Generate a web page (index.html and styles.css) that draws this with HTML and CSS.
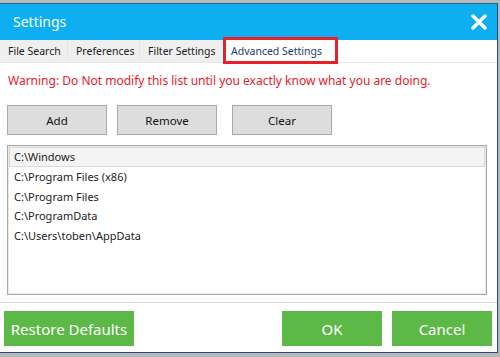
FILE: index.html
```html
<!DOCTYPE html>
<html lang="en">
<head>
    <meta charset="UTF-8">
    <meta name="viewport" content="width=device-width, initial-scale=1.0">
    <title>Settings</title>
    <link rel="stylesheet" href="styles.css">
</head>
<body>
    <div class="backdrop-strip"></div>
    <div class="dialog">
        <div class="titlebar">
            <span class="title">Settings</span>
            <button class="close" aria-label="Close">
                <svg width="16" height="16" viewBox="0 0 16 16">
                    <path d="M2 2 L14 14 M14 2 L2 14" stroke="#fff" stroke-width="3.4" stroke-linecap="round"/>
                </svg>
            </button>
        </div>
        <div class="tabs">
            <div class="tab tab-files">File Search</div>
            <div class="tab tab-prefs">Preferences</div>
            <div class="tab tab-filter">Filter Settings</div>
            <div class="tab active">Advanced Settings</div>
            <div class="tabs-rest"></div>
        </div>
        <div class="content">
            <p class="warning">Warning: Do Not modify this list until you exactly know what you are doing.</p>
            <div class="actions">
                <button class="btn">Add</button>
                <button class="btn btn-remove">Remove</button>
                <button class="btn btn-clear">Clear</button>
            </div>
            <ul class="paths">
                <li class="selected">C:\Windows</li>
                <li>C:\Program Files (x86)</li>
                <li>C:\Program Files</li>
                <li>C:\ProgramData</li>
                <li>C:\Users\toben\AppData</li>
            </ul>
        </div>
        <div class="footer">
            <button class="green restore">Restore Defaults</button>
            <div class="spacer"></div>
            <button class="green">OK</button>
            <button class="green">Cancel</button>
        </div>
    </div>
</body>
</html>
```

FILE: styles.css
```css
body {
    margin: 0;
    padding: 0;
    background-color: #b9b9b9;
    font-family: "Noto Sans", "Open Sans", sans-serif;
    overflow: hidden;
}

.backdrop-strip {
    height: 3px;
    background-color: #b9b9b9;
}

.dialog {
    width: 497px;
    background-color: #fff;
    border-top: 1px solid #1b6a9c;
    border-right: 1px solid #1b4f7a;
    border-bottom: 1px solid #1b4f7a;
}

.titlebar {
    height: 36px;
    background-color: #0eaff1;
    display: flex;
    align-items: center;
    justify-content: space-between;
}

.title {
    color: #fff;
    font-size: 14px;
    margin-left: 13px;
    margin-top: -1px;
}

.close {
    background: none;
    border: none;
    padding: 0;
    margin-right: 10px;
    width: 16px;
    height: 16px;
    display: flex;
}

.tabs {
    display: flex;
    height: 22px;
    border-bottom: 1px solid #e6e6e6;
}

.tab {
    box-sizing: border-box;
    background-color: #efefef;
    font-size: 10.5px;
    color: #222;
    line-height: 22px;
    padding-left: 8px;
    white-space: nowrap;
    border-right: 1px solid #e6e6e6;
}

.tab-files {
    width: 68px;
}

.tab-prefs {
    width: 72px;
}

.tab-filter {
    width: 82px;
    border-right: none;
}

.tab.active {
    position: relative;
    background-color: #fff;
    color: #1e3a78;
    margin-left: 2px;
    width: 113px;
    padding-left: 7px;
    border-right: none;
}

.tab.active::after {
    content: "";
    position: absolute;
    left: -1px;
    right: -1px;
    top: -3px;
    bottom: -2px;
    border: 3px solid #e8202a;
}

.tabs-rest {
    flex: 1;
}

.content {
    padding: 10px 10px 7px 7px;
    border-bottom: 1px solid #d6d6d6;
}

.warning {
    margin: 0 0 0 1px;
    font-size: 12px;
    line-height: 16px;
    color: #e8202a;
    white-space: nowrap;
}

.actions {
    display: flex;
    margin-top: 16px;
}

.btn {
    width: 100px;
    height: 30px;
    background-color: #dddddd;
    border: 1px solid #a9a9a9;
    font-family: "Noto Sans", "Open Sans", sans-serif;
    font-size: 11.5px;
    color: #111;
    padding: 0;
}

.btn-remove {
    margin-left: 10px;
}

.btn-clear {
    margin-left: 15px;
}

.paths {
    list-style: none;
    margin: 10px 0 0 0;
    padding: 1px;
    height: 146px;
    border: 1px solid #a8a8a8;
    box-shadow: inset 0 0 0 1px #e9e9e9;
}

.paths li {
    box-sizing: border-box;
    height: 19.75px;
    line-height: 18px;
    padding-left: 4px;
    font-size: 11px;
    color: #222;
    border: 1px solid transparent;
    white-space: nowrap;
}

.paths li.selected {
    background-color: #f4f4f4;
    border-color: #d9d9d9;
}

.footer {
    display: flex;
    padding: 8px 5px 6px 4px;
    gap: 10px;
}

.spacer {
    flex: 1;
}

.green {
    width: 100px;
    height: 35px;
    background-color: #5cb947;
    color: #fff;
    border: none;
    font-family: "Noto Sans", "Open Sans", sans-serif;
    font-size: 15px;
    padding: 0;
}

.green.restore {
    width: 130px;
}
```
